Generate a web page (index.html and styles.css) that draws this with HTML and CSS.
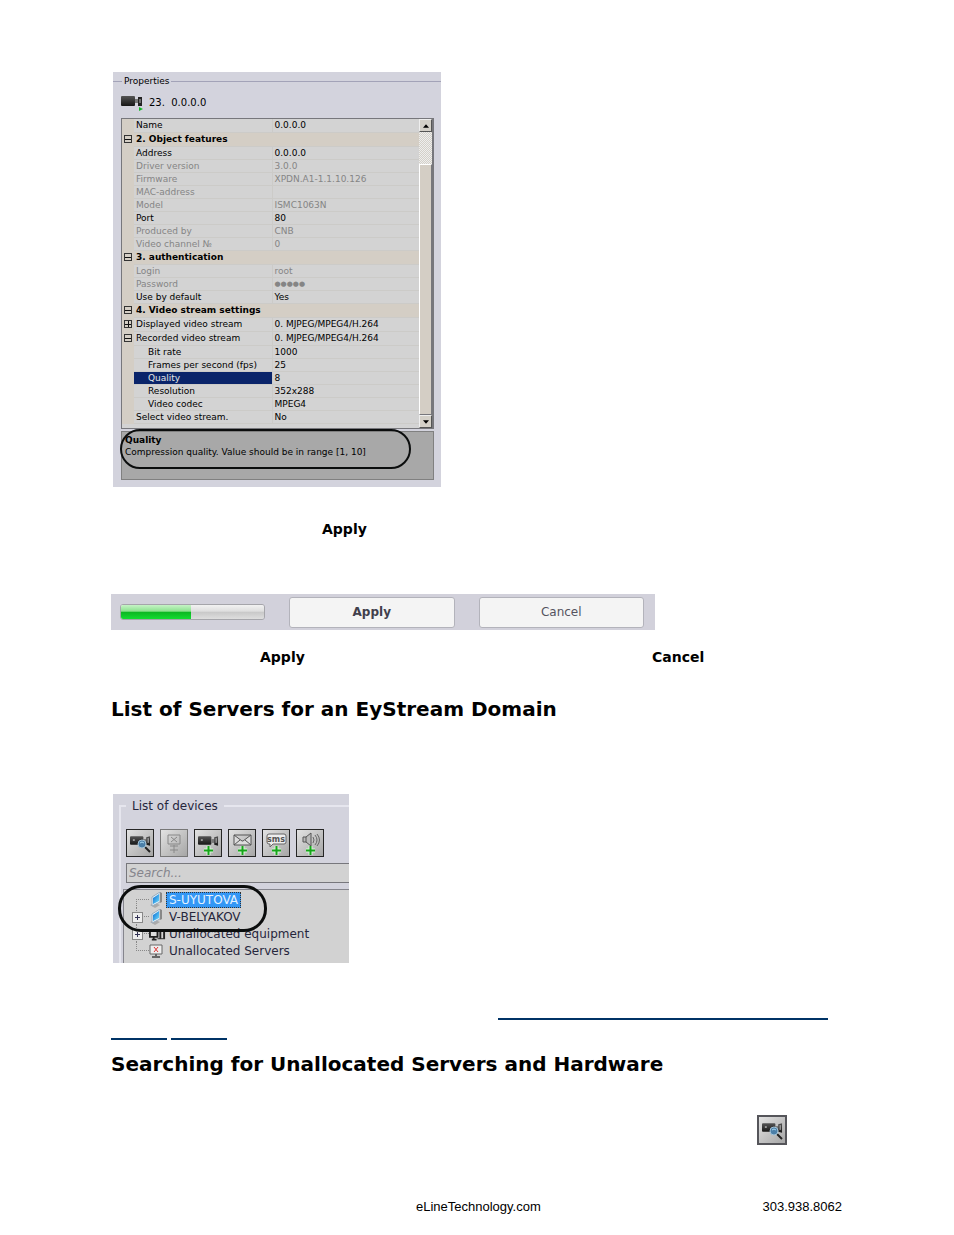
FILE: index.html
```html
<!DOCTYPE html>
<html lang="en">
<head>
    <meta charset="utf-8">
    <title>EyStream Manual</title>
    <link rel="stylesheet" href="styles.css">
</head>
<body>
    <!-- shared icon shapes -->
    <svg class="defs" aria-hidden="true">
        <defs>
            <linearGradient id="dark" x1="0" y1="0" x2="0" y2="1">
                <stop offset="0" stop-color="#555"/>
                <stop offset="1" stop-color="#161616"/>
            </linearGradient>
            <linearGradient id="screen" x1="0" y1="0" x2="1" y2="1">
                <stop offset="0" stop-color="#0a68d0"/>
                <stop offset="1" stop-color="#6fe0ff"/>
            </linearGradient>
            <symbol id="camera" viewBox="0 0 22 12">
                <rect x="0" y="1" width="14" height="9" rx="1" fill="url(#dark)"/>
                <rect x="3" y="4" width="2" height="2" fill="#999"/>
                <path d="M14 4h3v4h-3z" fill="#777"/>
                <path d="M17 2l4-1v10l-4-1z" fill="url(#dark)"/>
                <path d="M19 3v5" stroke="#ccc"/>
            </symbol>
            <symbol id="plus" viewBox="0 0 9 9">
                <path d="M4.500 0v9M0 4.500h9" stroke="#d8f5d8" stroke-width="4"/>
                <path d="M4.500 0v9M0 4.500h9" stroke="#16a51a" stroke-width="2"/>
            </symbol>
            <symbol id="find" viewBox="0 0 26 26">
                <use href="#camera" x="3" y="5" width="21" height="12"/>
                <path d="M18 17l5 5" stroke="#222" stroke-width="2"/>
                <circle cx="15" cy="14" r="4" fill="#4b7fa8" stroke="#a4c4d8"/>
                <path d="M13 13q2-2 4 0" fill="none" stroke="#a9d8f0"/>
            </symbol>
            <symbol id="server" viewBox="0 0 14 16">
                <path d="M1 13l5-2 5 2-5 3z" fill="#aaa"/>
                <path d="M3 5l8-5v10l-8 4z" fill="#e8f4fa" stroke="#9ab" stroke-width="1"/>
                <path d="M4 6l6-4v7l-6 3z" fill="url(#screen)"/>
                <path d="M11 0l2 1v9l-2 1z" fill="#888"/>
            </symbol>
        </defs>
    </svg>

    <main class="page">
        <section class="properties">
            <fieldset class="group">
                <legend>Properties</legend>
                <div class="device">
                    <svg class="device-icon" viewBox="0 0 24 18">
                        <rect x="0" y="3" width="14" height="10" rx="1" fill="url(#dark)"/>
                        <path d="M14 6h3v4h-3z" fill="#777"/>
                        <path d="M17 4h4v9h-4z" fill="#222"/>
                        <path d="M19 6v4" stroke="#bbb"/>
                        <path d="M18 14l4 2-4 2z" fill="#12b825"/>
                    </svg>
                    <span>23.&nbsp; 0.0.0.0</span>
                </div>
                <div class="grid-box">
                    <table class="grid">
                        <tbody>
                            <tr><td></td><th>Name</th><td>0.0.0.0</td></tr>
                            <tr class="category"><td><i class="toggle"></i></td><th colspan="2">2. Object features</th></tr>
                            <tr><td></td><th>Address</th><td>0.0.0.0</td></tr>
                            <tr class="readonly"><td></td><th>Driver version</th><td>3.0.0</td></tr>
                            <tr class="readonly"><td></td><th>Firmware</th><td>XPDN.A1-1.1.10.126</td></tr>
                            <tr class="readonly"><td></td><th>MAC-address</th><td></td></tr>
                            <tr class="readonly"><td></td><th>Model</th><td>ISMC1063N</td></tr>
                            <tr><td></td><th>Port</th><td>80</td></tr>
                            <tr class="readonly"><td></td><th>Produced by</th><td>CNB</td></tr>
                            <tr class="readonly"><td></td><th>Video channel №</th><td>0</td></tr>
                            <tr class="category"><td><i class="toggle"></i></td><th colspan="2">3. authentication</th></tr>
                            <tr class="readonly"><td></td><th>Login</th><td>root</td></tr>
                            <tr class="readonly"><td></td><th>Password</th><td class="dots">●●●●●</td></tr>
                            <tr><td></td><th>Use by default</th><td>Yes</td></tr>
                            <tr class="category"><td><i class="toggle"></i></td><th colspan="2">4. Video stream settings</th></tr>
                            <tr class="parent"><td><i class="toggle closed"></i></td><th>Displayed video stream</th><td>0. MJPEG/MPEG4/H.264</td></tr>
                            <tr class="parent"><td><i class="toggle"></i></td><th>Recorded video stream</th><td>0. MJPEG/MPEG4/H.264</td></tr>
                            <tr class="child"><td></td><th>Bit rate</th><td>1000</td></tr>
                            <tr class="child"><td></td><th>Frames per second (fps)</th><td>25</td></tr>
                            <tr class="child selected"><td></td><th>Quality</th><td>8</td></tr>
                            <tr class="child"><td></td><th>Resolution</th><td>352x288</td></tr>
                            <tr class="child"><td></td><th>Video codec</th><td>MPEG4</td></tr>
                            <tr><td></td><th>Select video stream.</th><td>No</td></tr>
                        </tbody>
                    </table>
                    <div class="scrollbar">
                        <button type="button" class="arrow" aria-label="Scroll up"><svg viewBox="0 0 7 4"><path d="M0 4L3.500 0 7 4z"/></svg></button>
                        <div class="track"></div>
                        <div class="thumb"></div>
                        <button type="button" class="arrow" aria-label="Scroll down"><svg viewBox="0 0 7 4"><path d="M0 0h7L3.500 4z"/></svg></button>
                    </div>
                </div>
                <div class="hint">
                    <b>Quality</b>
                    <span>Compression quality. Value should be in range [1, 10]</span>
                    <div class="ring"></div>
                </div>
            </fieldset>
        </section>

        <p class="note note-single"><b>Apply</b></p>

        <div class="actions">
            <progress value="49" max="100" aria-label="Progress"></progress>
            <button type="button" class="primary">Apply</button>
            <button type="button">Cancel</button>
        </div>

        <p class="note note-pair"><b>Apply</b><b>Cancel</b></p>

        <h2>List of Servers for an EyStream Domain</h2>

        <section class="devices">
            <fieldset class="device-group">
                <legend>List of devices</legend>
                <div class="toolbar">
                    <button type="button" class="tool" aria-label="Search devices"><svg viewBox="0 0 26 26"><use href="#find"/></svg></button>
                    <button type="button" class="tool" aria-label="Add server" disabled>
                        <svg viewBox="0 0 26 26" fill="none" stroke="#888"><path d="M7 5h12v9H7zM10 7l6 5M16 7l-6 5M9 16h8M13 15v8M9 20h8"/></svg>
                    </button>
                    <button type="button" class="tool" aria-label="Add camera">
                        <svg viewBox="0 0 26 26"><use href="#camera" x="3" y="5" width="21" height="12"/><use href="#plus" x="9" y="16" width="9" height="9"/></svg>
                    </button>
                    <button type="button" class="tool" aria-label="Add e-mail">
                        <svg viewBox="0 0 26 26"><path d="M5 5h17v10H5zM5 5l8 6h1l8-6M5 15l6-5M22 15l-6-5" fill="#ddd" stroke="#555"/><use href="#plus" x="9" y="16" width="9" height="9"/></svg>
                    </button>
                    <button type="button" class="tool" aria-label="Add SMS">
                        <svg viewBox="0 0 26 26"><path d="M6 4h15q2 0 2 2v6q0 2-2 2H10l-3 3v-3H6q-2 0-2-2V6q0-2 2-2z" fill="#eee" stroke="#666"/><text x="13" y="12" text-anchor="middle" class="sms">sms</text><use href="#plus" x="9" y="16" width="9" height="9"/></svg>
                    </button>
                    <button type="button" class="tool" aria-label="Add speaker">
                        <svg viewBox="0 0 26 26"><path d="M6 7h3l5-4v13l-5-4H6z" fill="#bbb" stroke="#555"/><path d="M9 7v5" stroke="#555"/><path d="M16 7q2 3 0 6M18 5q4 5 0 10M20 4q5 6 0 12" fill="none" stroke="#666"/><use href="#plus" x="9" y="16" width="9" height="9"/></svg>
                    </button>
                </div>
                <input class="search" type="text" placeholder="Search..." aria-label="Search">
                <ul class="tree">
                    <li><i class="branch first"></i><svg class="node" viewBox="0 0 14 16"><use href="#server"/></svg><span class="active">S-UYUTOVA</span></li>
                    <li><i class="branch expand"></i><svg class="node" viewBox="0 0 14 16"><use href="#server"/></svg><span>V-BELYAKOV</span></li>
                    <li><i class="branch expand"></i><svg class="node wide" viewBox="0 0 18 16"><path d="M1 4h8v7H1zM3 14h5M5 11v3" fill="#ddd" stroke="#222" stroke-width="2"/><path d="M12 4v9M16 4v9" stroke="#222" stroke-width="2"/><path d="M9 13h8" stroke="#222"/></svg><span>Unallocated equipment</span></li>
                    <li><i class="branch last"></i><svg class="node" viewBox="0 0 14 16"><path d="M1 2h12v9H1z" fill="#eee" stroke="#666"/><path d="M5 4l4 5M9 4l-4 5" stroke="#d33"/><path d="M3 14h8M7 11v3" stroke="#666" stroke-width="2"/></svg><span>Unallocated Servers</span></li>
                </ul>
            </fieldset>
            <div class="ring"></div>
        </section>

        <p class="links">
            <a class="link-long" href="#search" aria-label="Searching for unallocated servers and hardware"></a>
            <a class="link-short" href="#search" aria-label="Servers"></a>
            <a class="link-short" href="#search" aria-label="Hardware"></a>
        </p>

        <h2 id="search">Searching for Unallocated Servers and Hardware</h2>

        <div class="find-row">
            <button type="button" class="tool large" aria-label="Search devices"><svg viewBox="0 0 26 26"><use href="#find"/></svg></button>
        </div>

        <footer>
            <span>eLineTechnology.com</span>
            <span>303.938.8062</span>
        </footer>
    </main>
</body>
</html>
```
FILE: styles.css
```css
* {
    box-sizing: border-box;
}
body {
    margin: 0;
    background: #fff;
    color: #000;
    font-family: "DejaVu Sans", Verdana, sans-serif;
}
button, input {
    font-family: inherit;
    margin: 0;
}
fieldset {
    min-width: 0;
    margin: 0;
    padding: 0;
    border: 0;
}
.defs {
    position: absolute;
    width: 0;
    height: 0;
}
.page {
    padding: 72px 112px 16px 111px;
}
h2 {
    margin: 0;
    font-size: 20px;
    line-height: 26px;
}
.ring {
    position: absolute;
    border: 2px solid #0b0d0d;
}

/* properties window */
.properties {
    width: 328px;
    margin-left: 2px;
    padding: 2px 0 7px;
    background: #d3d3dd;
    font-size: 9px;
}
.group {
    border-top: 1px solid #a3a3b8;
    padding: 0 7px 0 8px;
}
.group legend {
    margin-left: 1px;
    padding: 0 2px;
    line-height: 14px;
}
.device {
    display: flex;
    align-items: center;
    gap: 4px;
    height: 30px;
    padding-bottom: 2px;
    font-size: 10px;
}
.device-icon {
    width: 24px;
    height: 18px;
}
.grid-box {
    display: flex;
    height: 311px;
    border: 1px solid #77777c;
    border-right-width: 2px;
    background: #d3d3d3;
}
.grid {
    flex: 1;
    align-self: flex-start;
    table-layout: fixed;
    border-collapse: collapse;
    font-size: 9px;
    line-height: 12px;
    white-space: nowrap;
}
.grid tr {
    height: 13px;
}
.grid td, .grid th {
    padding: 0 0 0 2px;
    border-bottom: 1px solid #cccbc8;
    font-weight: normal;
    text-align: left;
}
.grid th {
    width: 138px;
}
.grid td:first-child {
    width: 12px;
    background: #d4cec5;
    border-color: #d4cec5;
    line-height: 0;
}
.grid td:last-child {
    border-left: 1px solid #cccbc8;
}
.grid .category, .grid .parent {
    height: 14px;
}
.grid .category th {
    background: #d4cec5;
    font-weight: bold;
}
.grid .readonly {
    color: #858585;
}
.grid .dots {
    font-size: 7px;
}
.grid .child th {
    padding-left: 14px;
}
.grid .selected th {
    background: #0a246a;
    color: #e4e4e4;
}
.toggle {
    display: inline-block;
    width: 8px;
    height: 8px;
    border: 1px solid #333;
    background: linear-gradient(#111, #111) center / 6px 1px no-repeat;
}
.toggle.closed {
    background: linear-gradient(#111, #111) center / 6px 1px no-repeat, linear-gradient(#111, #111) center / 1px 6px no-repeat;
}
.scrollbar {
    display: flex;
    flex-direction: column;
    width: 13px;
}
.arrow {
    display: flex;
    align-items: center;
    justify-content: center;
    height: 13px;
    padding: 0;
    border: 1px solid;
    border-color: #eee #555 #555 #eee;
    background: #d4d0c8;
}
.arrow svg {
    width: 6px;
    height: 4px;
}
.track {
    height: 32px;
    background: repeating-conic-gradient(#eee 0 25%, #d4d0c8 0 50%) 0 0 / 2px 2px;
}
.thumb {
    flex: 1;
    border: 1px solid;
    border-color: #fff #77777c #77777c #fff;
    background: #d4cec5;
}
.hint {
    position: relative;
    display: flex;
    flex-direction: column;
    height: 49px;
    margin-top: 2px;
    padding: 2px 3px;
    border: 1px solid #808080;
    background: #a8a8a8;
    line-height: 12px;
}
.hint .ring {
    top: -3px;
    left: -2px;
    width: 291px;
    height: 40px;
    border-radius: 20px;
}

/* text between the windows */
.note {
    display: grid;
    margin: 0;
    font-size: 14px;
    line-height: 18px;
}
.note-single {
    padding: 33px 0 56px 211px;
}
.note-pair {
    grid-template-columns: 392px 1fr;
    padding: 18px 0 30px 149px;
}

/* apply / cancel bar */
.actions {
    display: flex;
    align-items: center;
    gap: 24px;
    width: 544px;
    height: 36px;
    padding: 0 11px 0 9px;
    background: #d2d1db;
}
.actions button {
    flex: 1;
    height: 31px;
    border: 1px solid #b3b3bb;
    border-radius: 3px;
    background: #f4f4f4;
    color: #55535f;
    font-size: 12px;
}
.actions .primary {
    color: #413f4c;
    font-weight: bold;
}
progress {
    appearance: none;
    width: 145px;
    height: 16px;
    border: 1px solid #a5a5aa;
    border-radius: 3px;
    overflow: hidden;
}
progress::-webkit-progress-bar {
    background: linear-gradient(#f2f2f2, #dedede 45%, #c8c8c8 50%, #dedede);
}
progress::-webkit-progress-value {
    background: linear-gradient(#c6f3c6, #8be28e 45%, #0cb622 50%, #13dc31);
}

/* device list */
.devices {
    position: relative;
    width: 236px;
    height: 169px;
    margin: 72px 0 0 2px;
    padding: 3px 0 0 6px;
    overflow: hidden;
    background: #d3d3dd;
    color: #26263c;
    font-size: 12px;
}
.device-group {
    border: 2px solid #e6e6ee;
    border-width: 2px 0 0 2px;
    padding-left: 2px;
}
.device-group legend {
    margin-left: 3px;
    padding: 0 6px;
    font-size: 12px;
    line-height: 18px;
}
.toolbar {
    display: flex;
    gap: 6px;
    padding: 14px 0 6px 3px;
}
.tool {
    width: 28px;
    height: 28px;
    padding: 0;
    border: 1px solid #252525;
    background: linear-gradient(135deg, #e2e2e2, #a6a6a6);
}
.tool svg {
    display: block;
    width: 26px;
    height: 26px;
}
.tool:disabled {
    border-color: #777;
}
.tool.large {
    width: 30px;
    height: 30px;
    border: 2px solid #55555a;
}
.sms {
    font-size: 8px;
    font-weight: bold;
    fill: #555;
}
.search {
    display: block;
    width: calc(100% - 3px);
    height: 20px;
    margin-left: 3px;
    padding: 0 2px;
    border: 1px solid #77777c;
    border-width: 1px 0 1px 1px;
    background: #d2d2d2;
    font-size: 12px;
    font-style: italic;
}
.search::placeholder {
    color: #85858c;
}
.tree {
    height: 74px;
    margin: 6px 0 0;
    padding: 1px 0 0 8px;
    border: 1px solid #85858d;
    border-width: 1px 0 0 1px;
    background: #d2d2d2;
    list-style: none;
}
.tree li {
    display: flex;
    align-items: center;
    height: 17px;
}
.tree span {
    padding: 0 3px;
    line-height: 16px;
}
.tree .active {
    outline: 1px dotted #333;
    outline-offset: -1px;
    background: #3397f5;
    color: #e3f2ff;
}
.node {
    width: 14px;
    height: 16px;
    margin-right: 3px;
}
.node.wide {
    width: 17px;
    margin-right: 0;
}
.branch {
    position: relative;
    width: 17px;
    height: 17px;
}
.branch::before {
    content: "";
    position: absolute;
    top: 0;
    bottom: 0;
    left: 4px;
    width: 13px;
    background: repeating-linear-gradient(#888 0 1px, transparent 1px 2px) 0 0 / 1px 100% no-repeat, repeating-linear-gradient(90deg, #888 0 1px, transparent 1px 2px) 0 8px / 100% 1px no-repeat;
}
.branch.first::before {
    top: 8px;
    background-position: 0 0, 0 0;
}
.branch.last::before {
    bottom: 8px;
}
.branch.expand::after {
    content: "";
    position: absolute;
    top: 4px;
    left: 0;
    width: 9px;
    height: 9px;
    border: 1px solid #888;
    background: linear-gradient(#335, #335) center / 5px 1px no-repeat, linear-gradient(#335, #335) center / 1px 5px no-repeat, #eee;
}
.devices > .ring {
    top: 91px;
    left: 5px;
    width: 149px;
    height: 47px;
    border-width: 3px;
    border-radius: 23px;
}

/* cross reference */
.links {
    display: flex;
    flex-wrap: wrap;
    justify-content: flex-start;
    gap: 0 4px;
    margin: 37px 0 11px;
}
.links a {
    height: 20px;
    border-bottom: 2px solid #003366;
}
.link-long {
    width: 330px;
    margin: 0 14px 0 387px;
}
.link-short {
    width: 56px;
}
.find-row {
    display: flex;
    justify-content: flex-end;
    padding: 38px 55px 0 0;
}

/* page footer */
footer {
    display: flex;
    justify-content: space-between;
    margin-top: 53px;
    padding-left: 305px;
    font-family: "Liberation Sans", Arial, sans-serif;
    font-size: 13px;
    line-height: 18px;
}
```
